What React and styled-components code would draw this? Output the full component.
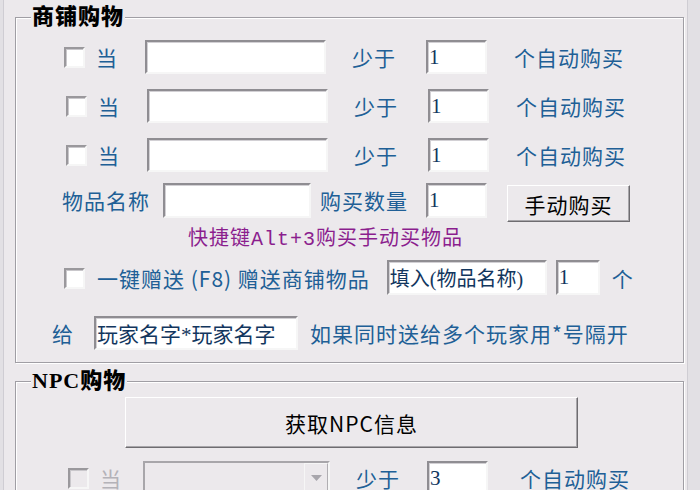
import React from 'react'
import styled, { createGlobalStyle } from 'styled-components'

const bg = '#ECE9EC'
const blue = '#205F96'
const ink = '#12365E'
const cjk = '"Noto Sans CJK SC", "Noto Sans", sans-serif'

const Global = createGlobalStyle`
html, body {
  margin: 0;
  padding: 0;
  background: ${bg};
}
#root {
  width: 700px;
  height: 490px;
  overflow: hidden;
}
`

const Window = styled.div`
display: flex;
height: 490px;
background: #E2E0E4;
`

const Panel = styled.div`
margin-left: 3px;
width: 685px;
box-sizing: border-box;
border-left: 1px solid #CFCDD3;
border-right: 1px solid #CFCDD3;
background: ${bg};
padding-top: 5px;
`

const Group = styled.fieldset`
margin: ${p => p.$top || 0}px 0 0 11px;
width: 669px;
box-sizing: border-box;
padding: 0 0 ${p => p.$bottom || 0}px 0;
border: 1px solid #A09EA4;
box-shadow: inset 1px 1px 0 #fff, 1px 1px 0 #fff;
`

const Title = styled.legend`
margin-left: 15px;
padding: 0 1px;
background: ${bg};
font-family: "Liberation Serif", "Noto Sans CJK SC", serif;
font-weight: 900;
font-size: 22px;
line-height: 24px;
letter-spacing: 1px;
color: #000;
`

// rows with the watch-list layout: checkbox, 当, item, 少于, amount, tail text
const WatchRow = styled.div`
display: grid;
grid-template-columns: ${p => p.$cols || '32px 49px 207px 74px 88px auto'};
align-items: center;
height: 34px;
margin-top: ${p => p.$top}px;
padding-left: ${p => p.$left || 49}px;
`

const Row = styled.div`
display: flex;
align-items: ${p => p.$align || 'center'};
height: ${p => p.$h || 34}px;
margin-top: ${p => p.$top}px;
padding-left: ${p => p.$left}px;
`

const Label = styled.span`
font-family: ${cjk};
font-size: 21px;
line-height: 24px;
letter-spacing: 1px;
white-space: nowrap;
color: ${p => (p.$off ? '#B4B2B8' : blue)};
margin-left: ${p => p.$ml || 0}px;
margin-top: ${p => p.$mt || 0}px;
`

const Hint = styled.span`
font-family: "Liberation Mono", "Noto Sans CJK SC", monospace;
font-size: 20px;
line-height: 22px;
letter-spacing: 1px;
color: #8B1E8E;
`

const Check = styled.span`
display: block;
width: 21px;
height: 21px;
box-sizing: border-box;
border: 2px solid;
border-color: #9A989C #F6F6F6 #F6F6F6 #9A989C;
box-shadow: inset 1px 1px 0 #C9C7CB;
background: ${p => (p.$off ? bg : '#fff')};
margin-top: ${p => p.$dy || 0}px;
`

const Field = styled.input`
display: block;
width: ${p => p.$w}px;
height: ${p => p.$h || 34}px;
box-sizing: border-box;
margin: 0 0 0 ${p => p.$ml || 0}px;
padding: 0 0 0 1px;
border: 2px solid;
border-color: #8F8D92 #F6F6F6 #F6F6F6 #8F8D92;
box-shadow: inset 1px 1px 0 #D2D0D4;
background: #fff;
outline: none;
font-family: "Liberation Serif", "Noto Sans CJK SC", serif;
font-size: ${p => p.$fs || 21}px;
color: ${ink};
`

const Button = styled.button`
display: block;
width: ${p => p.$w}px;
height: ${p => p.$h}px;
box-sizing: border-box;
margin: ${p => p.$mt || 0}px 0 0 ${p => p.$ml || 0}px;
padding: 0;
border: 1px solid;
border-color: #fff #6E6C70 #6E6C70 #fff;
box-shadow: inset -1px -1px 0 #A8A6AA;
background: ${bg};
font-family: ${cjk};
font-size: 21px;
letter-spacing: 1px;
color: #000;
`

const Combo = styled.div`
display: flex;
justify-content: flex-end;
width: 187px;
height: 34px;
box-sizing: border-box;
border: 2px solid;
border-color: #A8A6AA #F6F6F6 #F6F6F6 #A8A6AA;
background: ${bg};
`

const ComboArrow = styled.span`
display: flex;
align-items: center;
justify-content: center;
width: 24px;
box-sizing: border-box;
border: 1px solid;
border-color: #F6F6F6 #B0AEB2 #B0AEB2 #F6F6F6;
`

const Item = ({ off }) => (
  <>
    <Check $off={off} />
    <Label $off={off}>当</Label>
  </>
)

export default function App() {
  return (
    <Window>
      <Global />
      <Panel>
        <Group $bottom={12}>
          <Title>商铺购物</Title>
          {[11, 15, 15].map((top, i) => (
            <WatchRow key={i} $top={top} $left={i === 0 ? 48 : 50}>
              <Item />
              <Field $w={181} readOnly defaultValue="" />
              <Label>少于</Label>
              <Field $w={61} readOnly defaultValue="1" />
              <Label>个自动购买</Label>
            </WatchRow>
          ))}
          <Row $top={11} $left={46} $h={39} $align="flex-start">
            <Label $mt={5}>物品名称</Label>
            <Field $w={148} $h={35} $ml={13} readOnly defaultValue="" />
            <Label $ml={9} $mt={5}>购买数量</Label>
            <Field $w={61} $h={35} $ml={18} readOnly defaultValue="1" />
            <Button $w={123} $h={37} $ml={20} $mt={2}>手动购买</Button>
          </Row>
          <Row $top={6} $left={172} $h={24}>
            <Hint>快捷键Alt+3购买手动买物品</Hint>
          </Row>
          <Row $top={8} $left={48} $h={35}>
            <Check $dy={2} />
            <Label $ml={12}>一键赠送 (F8) 赠送商铺物品</Label>
            <Field $w={160} $h={35} $ml={17} $fs={20} readOnly defaultValue="填入(物品名称)" />
            <Field $w={44} $h={35} $ml={9} readOnly defaultValue="1" />
            <Label $ml={12}>个</Label>
          </Row>
          <Row $top={21} $left={36}>
            <Label>给</Label>
            <Field $w={204} $ml={20} $fs={21} readOnly defaultValue="玩家名字*玩家名字" />
            <Label $ml={12}>如果同时送给多个玩家用*号隔开</Label>
          </Row>
        </Group>
        <Group $top={6}>
          <Title>NPC购物</Title>
          <Row $top={4} $left={109} $h={51}>
            <Button $w={453} $h={51}>获取NPC信息</Button>
          </Row>
          <WatchRow $top={13} $left={52} $cols="32px 43px 213px 71px 93px auto">
            <Item off />
            <Combo>
              <ComboArrow>
                <svg width="11" height="6" viewBox="0 0 11 6">
                  <path d="M0 0h11L5.5 6z" fill="#A8A6AC" />
                </svg>
              </ComboArrow>
            </Combo>
            <Label>少于</Label>
            <Field $w={61} readOnly defaultValue="3" />
            <Label>个自动购买</Label>
          </WatchRow>
        </Group>
      </Panel>
    </Window>
  )
}
